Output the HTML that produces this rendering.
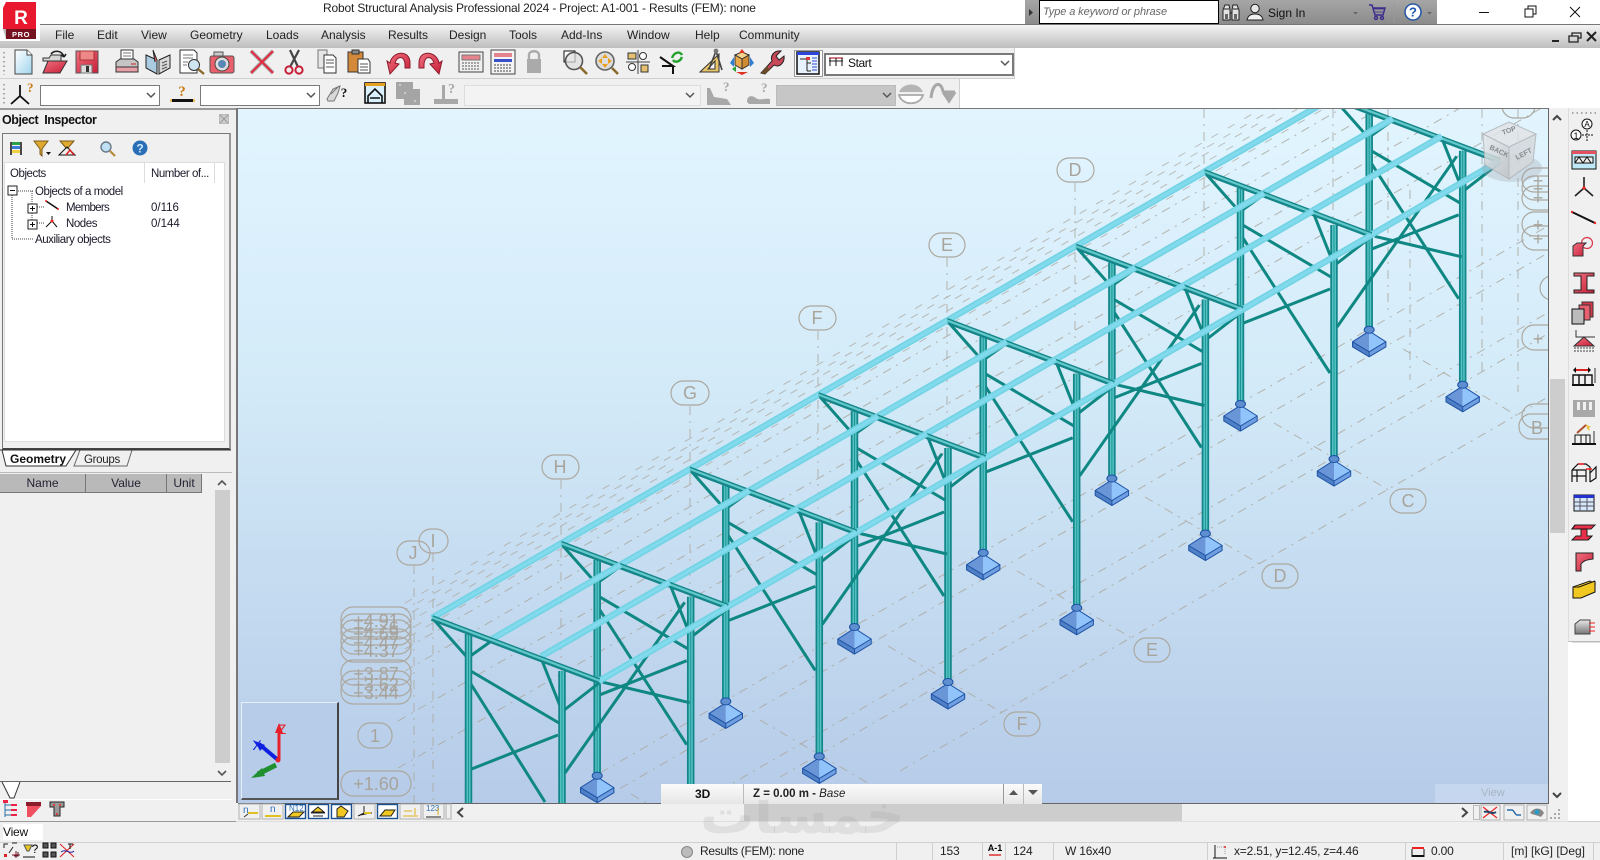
<!DOCTYPE html>
<html><head><meta charset="utf-8"><title>Robot Structural Analysis</title>
<style>
html,body{margin:0;padding:0;background:#fff;width:1600px;height:860px;overflow:hidden}
#p{position:relative;width:1600px;height:860px;overflow:hidden;background:#fff;font:12px "Liberation Sans",sans-serif;color:#111}
#p div{position:absolute;box-sizing:border-box}
.t{white-space:nowrap;line-height:14px}
.m{top:28px;font-size:12px;color:#222}
.s{top:844px;font-size:12px;color:#222;letter-spacing:-.2px}
.v{top:843px;width:1px;height:17px;background:#cfcfcf}
.o{font-size:11.5px;color:#1a1a2a;letter-spacing:-.45px}
.h{top:474px;height:19px;background:#b9b9b9;border-right:1px solid #777;border-bottom:1px solid #777;text-align:center;line-height:19px;color:#223}
</style></head><body><div id="p">

<!-- title bar -->
<div class="t" style="left:323px;top:1px;font-size:12px;color:#222;letter-spacing:-.17px">Robot Structural Analysis Professional 2024 - Project: A1-001 - Results (FEM): none</div>
<div style="left:1025px;top:0;width:412px;height:25px;background:linear-gradient(#a6a6a6,#8a8a8a)"></div>
<div class="t" style="left:1039px;top:0;width:180px;height:24px;background:#fff;border:1px solid #000;padding:4px 3px;font-size:11px;letter-spacing:-.1px;font-style:italic;color:#666">Type a keyword or phrase</div>
<div class="t" style="left:1268px;top:6px;color:#111">Sign In</div>

<!-- menu bar -->
<div style="left:0;top:24px;width:1600px;height:24px;background:linear-gradient(#f4f4f4,#bdbdbd);border-top:1px solid #777"></div>
<div class="t m" style="left:55px">File</div>
<div class="t m" style="left:97px">Edit</div>
<div class="t m" style="left:141px">View</div>
<div class="t m" style="left:190px">Geometry</div>
<div class="t m" style="left:266px">Loads</div>
<div class="t m" style="left:321px">Analysis</div>
<div class="t m" style="left:388px">Results</div>
<div class="t m" style="left:449px">Design</div>
<div class="t m" style="left:509px">Tools</div>
<div class="t m" style="left:561px">Add-Ins</div>
<div class="t m" style="left:627px">Window</div>
<div class="t m" style="left:695px">Help</div>
<div class="t m" style="left:739px">Community</div>

<!-- toolbars -->
<div style="left:0;top:48px;width:1015px;height:31px;background:#f0f0f0;border-bottom:1px solid #cfcfcf;border-right:1px solid #cfcfcf"></div>
<div style="left:0;top:79px;width:960px;height:29px;background:#f0f0f0;border-right:1px solid #cfcfcf"></div>
<div style="left:794px;top:50px;width:29px;height:27px;background:#fff;border:1px solid #999"></div>
<div class="t" style="left:824px;top:53px;width:190px;height:23px;background:#fff;border:2px solid #7a7a7a;padding:1px 0 0 22px;letter-spacing:-.4px">Start</div>
<div style="left:40px;top:85px;width:120px;height:21px;background:#fff;border:1px solid #7a7a7a"></div>
<div style="left:200px;top:85px;width:120px;height:21px;background:#fff;border:1px solid #7a7a7a"></div>
<div style="left:464px;top:85px;width:237px;height:21px;background:#f3f3f3;border:1px solid #ddd"></div>
<div style="left:776px;top:85px;width:120px;height:21px;background:#c6c6c6;border:1px solid #bbb"></div>

<!-- left panel -->
<div style="left:0;top:108px;width:236px;height:714px;background:#f0f0f0;border-top:2px solid #9a9a9a;border-bottom:1px solid #999"></div>
<div class="t" style="left:2px;top:113px;font-size:12.5px;font-weight:bold;letter-spacing:-.45px;word-spacing:3px;color:#111">Object Inspector</div>
<div style="left:219px;top:114px;width:10px;height:10px;background:#ccc;border:1px solid #bbb"></div>
<div style="left:2px;top:133px;width:229px;height:317px;border:1px solid #777;border-bottom:2px solid #444;border-right:2px solid #999;background:#f0f0f0"></div>
<div style="left:4px;top:162px;width:221px;height:280px;background:#fff;border:1px solid #ddd"></div>
<div style="left:144px;top:163px;width:1px;height:20px;background:#ddd"></div>
<div style="left:214px;top:163px;width:1px;height:20px;background:#ddd"></div>
<div class="t o" style="left:10px;top:167px">Objects</div>
<div class="t o" style="left:151px;top:167px">Number of...</div>
<div class="t o" style="left:35px;top:185px">Objects of a model</div>
<div class="t o" style="left:66px;top:201px;letter-spacing:-.7px">Members</div>
<div class="t o" style="left:151px;top:201px;letter-spacing:0">0/116</div>
<div class="t o" style="left:66px;top:217px">Nodes</div>
<div class="t o" style="left:151px;top:217px;letter-spacing:0">0/144</div>
<div class="t o" style="left:35px;top:233px">Auxiliary objects</div>
<div style="left:0;top:472px;width:232px;height:1px;background:#bbb"></div>
<div class="h" style="left:0;width:86px">Name</div>
<div class="h" style="left:86px;width:81px">Value</div>
<div class="h" style="left:167px;width:35px">Unit</div>
<div style="left:215px;top:490px;width:15px;height:273px;background:#cdcdcd"></div>
<div style="left:0;top:781px;width:231px;height:1px;background:#666"></div>
<div style="left:0;top:799px;width:232px;height:1px;background:#fff"></div>

<!-- viewport -->
<div style="left:236px;top:108px;width:2px;height:695px;background:#777"></div>
<div style="left:238px;top:108px;width:1311px;height:696px;overflow:hidden;border-top:1px solid #777;border-bottom:1px solid #666;border-right:1px solid #666;background:linear-gradient(#e2f5ff 0%,#d3eaf8 40%,#b5cbe8 100%)">
<svg width="1600" height="695" viewBox="0 0 1600 695" style="position:absolute;left:-238px;top:0" xmlns="http://www.w3.org/2000/svg">
<g transform="translate(0 -109)">
<defs>
<line id="L" x1="0" y1="0" x2="1400" y2="-808"/>
<line id="G" x1="-60" y1="-35" x2="56" y2="32.700"/>
<g id="ft">
<path d="M-16.7-1L0 9V14L-16.7 4Z" fill="#4f7fc4"/><path d="M16.7-1L0 9V14L16.7 4Z" fill="#6f9fe0"/>
<path d="M-16.7-1L0-11.7V9Z" fill="#6a96d8"/><path d="M16.7-1L0-11.7V9Z" fill="#90c4fb"/>
<path d="M0-11.7L-16.7-1V4L0 14L16.7 4V-1ZM-16.7-1L0 9L16.7-1M0 9V14" fill="none" stroke="#1d52a5" stroke-width="1"/>
<ellipse cx="0" cy="-13" rx="5" ry="3.500" fill="#5d8ed0" stroke="#1d52a5"/>
</g>
<g id="f">
<path d="M3 3L34 38M37 39L58 24M109 40L128 88M131 93L167 65M37 52L127 105M37 63L126 201M37 152L126 117" stroke="#0f8783" stroke-width="3" fill="none"/>
<path d="M36.5 16V232M130 53V287" stroke="#12868a" stroke-width="7.500" fill="none"/>
<path d="M36.5 16V232M130 53V287" stroke="#55c2c2" stroke-width="4" fill="none"/>
<path d="M36.5 16V232M130 53V287" stroke="#1d9698" stroke-width="1" fill="none"/>
<use href="#ft" x="36.5" y="245"/><use href="#ft" x="130" y="300"/>
</g>
<g id="f0">
<path d="M3 3L34 38M37 39L58 24M109 40L128 88M131 93L167 65M37 52L127 105M37 63L113 184M37 152L126 117" stroke="#0f8783" stroke-width="3" fill="none"/>
<path d="M36.5 16V185M130 53V185" stroke="#12868a" stroke-width="7.500" fill="none"/>
<path d="M36.5 16V185M130 53V185" stroke="#55c2c2" stroke-width="4" fill="none"/>
<path d="M36.5 16V185M130 53V185" stroke="#1d9698" stroke-width="1" fill="none"/>
</g>
<g id="r">
<path d="M0 0L167 63" stroke="#14868a" stroke-width="6"/>
<path d="M0-.5L167 62.5" stroke="#62c8ca" stroke-width="2.200"/>
</g>
<g id="pu" stroke-width="6.500" fill="none">
<path stroke="#74d3e5" d="M0 0L128.7-74.3M60 21L188.7-53.3M109 38.5L237.7-35.8M167 63L295.7-11.3"/>
<path stroke="#82dbec" stroke-width="3" d="M0 0L128.7-74.3M60 21L188.7-53.3M109 38.5L237.7-35.8M167 63L295.7-11.3"/>
</g>
<path id="h" d="M133 155L252.7-15.7" stroke="#0f8783" stroke-width="3"/>
<path id="i" d="M42 138.5L129 159" stroke="#0f8783" stroke-width="3"/>
<linearGradient id="cb" x1="0" y1="0" x2="1" y2="1"><stop offset="0" stop-color="#e8eaec"/><stop offset="1" stop-color="#bfc3c7"/></linearGradient>
</defs>

<!-- grid -->
<g stroke="#aca89f" stroke-width="1" fill="none" stroke-dasharray="8 11" stroke-opacity=".75">
<use href="#L" x="405" y="603" stroke-dashoffset="0"/><use href="#L" x="405" y="610" stroke-dashoffset="5"/><use href="#L" x="405" y="616" stroke-dashoffset="11"/><use href="#L" x="405" y="624" stroke-dashoffset="2"/><use href="#L" x="405" y="632" stroke-dashoffset="8"/><use href="#L" x="405" y="639" stroke-dashoffset="14"/>
</g>
<g stroke="#aca89f" stroke-width="1" fill="none" stroke-dasharray="9 6 2 6" stroke-opacity=".85">
<use href="#L" x="405" y="649"/><use href="#L" x="405" y="671"/><use href="#L" x="398" y="721"/><use href="#L" x="398" y="768"/>
<use href="#L" x="600" y="773"/><use href="#L" x="600" y="800"/><use href="#L" x="700" y="802"/><use href="#L" x="780" y="777"/><use href="#L" x="900" y="771"/>
<path d="M631 794L700 834"/>
<use href="#G" x="820" y="755"/><use href="#G" x="948" y="681"/><use href="#G" x="1077" y="606"/><use href="#G" x="1205" y="532"/><use href="#G" x="1334" y="458"/><use href="#G" x="1463" y="384"/>
<path d="M414 565V803M433 553V803M561 480V780M690 406V710M818 331V640M947 258V560M1075 183V490M1204 109V415M1333 109V280M1388 109V310M1410 190V380M1482 109V372M1518 109V392"/>
</g>

<!-- structure, back to front -->
<use href="#f" x="1332.7" y="97.8"/><use href="#i" x="1332.7" y="97.8"/><use href="#r" x="1332.7" y="97.8"/>
<use href="#f" x="1204" y="172"/><use href="#h" x="1204" y="172"/><use href="#pu" x="1204" y="172"/><use href="#r" x="1204" y="172"/>
<use href="#f" x="1075.4" y="246.5"/><use href="#i" x="1075.4" y="246.5"/><use href="#pu" x="1075.4" y="246.5"/><use href="#r" x="1075.4" y="246.5"/>
<use href="#f" x="946.7" y="320.8"/><use href="#h" x="946.7" y="320.8"/><use href="#pu" x="946.7" y="320.8"/><use href="#r" x="946.7" y="320.8"/>
<use href="#f" x="818" y="395"/><use href="#i" x="818" y="395"/><use href="#pu" x="818" y="395"/><use href="#r" x="818" y="395"/>
<use href="#f" x="689.3" y="469.4"/><use href="#h" x="689.3" y="469.4"/><use href="#pu" x="689.3" y="469.4"/><use href="#r" x="689.3" y="469.4"/>
<use href="#f" x="560.7" y="543.7"/><use href="#i" x="560.7" y="543.7"/><use href="#pu" x="560.7" y="543.7"/><use href="#r" x="560.7" y="543.7"/>
<use href="#f0" x="432" y="618"/><use href="#h" x="432" y="618"/><use href="#pu" x="432" y="618"/><use href="#r" x="432" y="618"/>

<!-- labels -->
<g fill="none" stroke="#aca89f" stroke-width="1.200">
<rect x="1057" y="158" width="37" height="24" rx="12"/><rect x="929" y="233" width="36" height="24" rx="12"/><rect x="799" y="306" width="37" height="24" rx="12"/><rect x="671" y="381" width="38" height="24" rx="12"/><rect x="542" y="455" width="37" height="24" rx="12"/><rect x="397" y="541" width="33" height="24" rx="12"/><rect x="419" y="529" width="29" height="24" rx="12"/>
<rect x="1390" y="489" width="36" height="24" rx="12"/><rect x="1262" y="564" width="36" height="24" rx="12"/><rect x="1134" y="638" width="36" height="24" rx="12"/><rect x="1004" y="712" width="36" height="24" rx="12"/>
<rect x="341" y="607" width="70" height="25" rx="12"/><rect x="341" y="614" width="70" height="25" rx="12"/><rect x="341" y="620" width="70" height="25" rx="12"/><rect x="341" y="629" width="70" height="25" rx="12"/><rect x="341" y="637" width="70" height="25" rx="12"/><rect x="341" y="660" width="70" height="25" rx="12"/><rect x="341" y="671" width="70" height="25" rx="12"/><rect x="341" y="679" width="70" height="25" rx="12"/>
<rect x="358" y="723" width="34" height="25" rx="12"/><rect x="341" y="771" width="70" height="25" rx="12"/>
<rect x="1502" y="94" width="33" height="24" rx="12"/><rect x="1522" y="168" width="50" height="24" rx="12"/><rect x="1522" y="176" width="50" height="24" rx="12"/><rect x="1522" y="186" width="50" height="24" rx="12"/><rect x="1522" y="212" width="50" height="24" rx="12"/><rect x="1522" y="226" width="50" height="24" rx="12"/><rect x="1540" y="276" width="40" height="24" rx="12"/><rect x="1522" y="325" width="50" height="25" rx="12"/><rect x="1522" y="404" width="50" height="24" rx="12"/><rect x="1519" y="414" width="50" height="25" rx="12"/>
</g>
<g fill="#a8a49c" font-family="Liberation Sans,sans-serif" font-size="18" text-anchor="middle">
<text x="1075" y="176">D</text><text x="947" y="251">E</text><text x="817" y="324">F</text><text x="690" y="399">G</text><text x="560" y="473">H</text><text x="413" y="559">J</text><text x="433" y="547">I</text>
<text x="1408" y="507">C</text><text x="1280" y="582">D</text><text x="1152" y="656">E</text><text x="1022" y="730">F</text>
<text x="1538" y="345">+</text><text x="1537" y="434">B</text>
<text x="1538" y="187">+</text><text x="1538" y="195">+</text><text x="1538" y="204">+</text><text x="1538" y="231">+</text><text x="1538" y="245">+</text>
<text x="376" y="627">+4.91</text><text x="376" y="634">+4.76</text><text x="376" y="640">+4.69</text><text x="376" y="649">+4.47</text><text x="376" y="657">+4.37</text><text x="376" y="680">+3.87</text><text x="376" y="691">+3.62</text><text x="376" y="699">+3.44</text>
<text x="375" y="742">1</text><text x="376" y="790">+1.60</text>
</g>

<!-- view cube -->
<ellipse cx="1512" cy="168" rx="30" ry="14" fill="#9aa0a6" opacity=".3"/>
<g stroke="#adb0b4" stroke-width="1" opacity=".82">
<path d="M1509 122L1483 134L1509 147L1536 134Z" fill="#e2e4e6"/>
<path d="M1483 134L1485 165L1509 179V147Z" fill="url(#cb)"/>
<path d="M1536 134L1533 162L1509 179V147Z" fill="#d5d8db"/>
</g>
<g fill="#85888b" font-size="7" font-family="Liberation Sans,sans-serif" font-weight="bold">
<text transform="translate(1489 149) rotate(25)">BACK</text><text transform="translate(1517 160) rotate(-28)">LEFT</text><text transform="translate(1503 135) rotate(-20)">TOP</text>
</g>
</g>
</svg>
</div>

<!-- nav box -->
<div style="left:241px;top:702px;width:98px;height:98px;background:#b6cce8;border-top:1px solid #e6eef8;border-left:1px solid #e6eef8;border-right:2px solid #444;border-bottom:2px solid #555"></div>

<!-- floating view bar -->
<div style="left:661px;top:784px;width:381px;height:20px;background:linear-gradient(#fbfbfb,#e6e6e6)"></div>
<div style="left:743px;top:784px;width:1px;height:20px;background:#bbb"></div>
<div style="left:1003px;top:784px;width:1px;height:20px;background:#999"></div>
<div style="left:1023px;top:784px;width:1px;height:20px;background:#bbb"></div>
<div class="t" style="left:695px;top:787px;font-weight:bold;font-size:12px">3D</div>
<div class="t" style="left:753px;top:787px;font-weight:bold;font-size:11.5px;color:#222">Z = 0.00 m - <i style="font-weight:normal">Base</i></div>
<div style="left:1435px;top:784px;width:113px;height:19px;background:rgba(225,235,248,.35)"></div>
<div class="t" style="left:1481px;top:786px;font-size:11px;color:#a9b4c2">View</div>

<!-- right scrollbar & toolbar -->
<div style="left:1549px;top:108px;width:19px;height:696px;background:#f0f0f0"></div>
<div style="left:1550px;top:379px;width:15px;height:154px;background:#cdcdcd"></div>
<div style="left:1568px;top:108px;width:32px;height:534px;background:#f0f0f0;border-left:1px solid #ddd;border-bottom:1px solid #bbb"></div>

<!-- bottom strip -->
<div style="left:236px;top:804px;width:1332px;height:18px;background:#f0f0f0;border-bottom:1px solid #ddd"></div>
<div style="left:744px;top:804px;width:438px;height:17px;background:#cdcdcd"></div>
<div style="left:0;top:822px;width:1600px;height:38px;background:#f0f0f0"></div>
<div style="left:1568px;top:821px;width:32px;height:1px;background:#ccc"></div>
<div style="left:0;top:842px;width:1600px;height:1px;background:#d0d0d0"></div>
<div class="t" style="left:3px;top:824px;width:40px;height:16px;background:#fff;padding-top:1px;font-size:12px;letter-spacing:-.2px">View</div>

<!-- status bar -->
<div class="v" style="left:896px"></div><div class="v" style="left:932px"></div><div class="v" style="left:982px"></div><div class="v" style="left:1005px"></div><div class="v" style="left:1053px"></div><div class="v" style="left:1207px"></div><div class="v" style="left:1405px"></div><div class="v" style="left:1503px"></div><div class="v" style="left:1593px"></div>
<div class="t s" style="left:700px;letter-spacing:-.32px">Results (FEM): none</div>
<div class="t s" style="left:940px">153</div>
<div class="t s" style="left:1013px">124</div>
<div class="t s" style="left:1065px">W 16x40</div>
<div class="t s" style="left:1234px">x=2.51, y=12.45, z=4.46</div>
<div class="t s" style="left:1431px">0.00</div>
<div class="t s" style="left:1511px;letter-spacing:0">[m] [kG] [Deg]</div>

<!-- watermark -->
<div style="left:700px;top:800px;width:200px;height:42px;overflow:hidden"><div class="t" style="left:0;top:-12px;font:bold 54px/54px 'DejaVu Sans',sans-serif;color:rgba(150,150,150,.18)">خمسات</div></div>

<!-- icons overlay -->
<svg width="1600" height="860" viewBox="0 0 1600 860" style="position:absolute;left:0;top:0;display:block" xmlns="http://www.w3.org/2000/svg" font-family="Liberation Sans,sans-serif">
<defs>
<linearGradient id="dg" x1="0" y1="0" x2="1" y2="1"><stop offset="0" stop-color="#fff"/><stop offset="1" stop-color="#9fd4ee"/></linearGradient>
<linearGradient id="rg" x1="0" y1="0" x2="1" y2="1"><stop offset="0" stop-color="#f0707f"/><stop offset="1" stop-color="#c81e38"/></linearGradient>
<linearGradient id="gg" x1="0" y1="0" x2="0" y2="1"><stop offset="0" stop-color="#e8e8e8"/><stop offset="1" stop-color="#777"/></linearGradient>
<path id="cv" d="M-4-2L0 2L4-2" fill="none" stroke="#555" stroke-width="1.500"/>
</defs>

<!-- logo -->
<rect x="0" y="0" width="40" height="41" fill="#fff"/>
<path d="M6 2H36V29H3V8Z" fill="#e8182f"/>
<path d="M6 29H36V39H6Z" fill="#75121f"/><path d="M3 29L6 29V39Z" fill="#b8b8b8"/>
<text x="21" y="24" text-anchor="middle" font-size="19" font-weight="bold" fill="#fff">R</text>
<text x="21" y="37" text-anchor="middle" font-size="7.500" font-weight="bold" fill="#fff" letter-spacing=".6">PRO</text>

<!-- title bar icons -->
<path d="M1029 9L1033 12.5L1029 16Z" fill="#333"/>
<g transform="translate(1231 12)"><path d="M-8 8V-2L-6-7H-2L-1-2V8ZM1 8V-2L2-7H6L8-2V8Z" fill="#e2e2e2" stroke="#222"/><path d="M-7-3H-2M2-3H7M-1 1H1" stroke="#222"/><rect x="-6" y="2" width="3" height="5" fill="#666"/><rect x="3" y="2" width="3" height="5" fill="#666"/></g>
<g transform="translate(1255 12)"><circle cx="0" cy="-3.500" r="4.200" fill="#e8e8e8" stroke="#222"/><path d="M-8 8C-7 3-3 2 0 2S7 3 8 8Z" fill="#f2f2f2" stroke="#222"/></g>
<path d="M1353 12H1358L1355.5 14.5Z" fill="#666"/>
<g transform="translate(1377 12)" fill="none" stroke="#3a2a8c" stroke-width="1.400"><path d="M-8-7H-5L-2 3H6L8-4H-4"/><path d="M-3-3H7M-2 0H6" stroke-width=".8"/><circle cx="-1" cy="6" r="1.500"/><circle cx="5" cy="6" r="1.500"/></g>
<path d="M1394 3V22" stroke="#999"/>
<circle cx="1413" cy="12" r="8" fill="#fff" stroke="#2b5aa5" stroke-width="1.600"/><text x="1413" y="16.5" text-anchor="middle" font-size="13" font-weight="bold" fill="#1d55b0">?</text>
<path d="M1427 12H1432L1429.5 14.5Z" fill="#666"/>
<path d="M1479 12.5H1489" stroke="#111"/>
<path d="M1525 9H1533V17H1525ZM1528 9V6H1536V14H1533" fill="none" stroke="#111"/>
<path d="M1570 7L1580 17M1580 7L1570 17" stroke="#111"/>
<path d="M1552 41H1559" stroke="#222" stroke-width="2"/>
<path d="M1569 36H1578V42H1569ZM1572 36V33H1581V38H1578" fill="none" stroke="#222" stroke-width="1.300"/>
<path d="M1587 32L1596 41M1596 32L1587 41" stroke="#222" stroke-width="2"/>

<!-- grippers -->
<path d="M4 52V75M4 84V106M1572 113H1598" stroke="#a8a8a8" stroke-width="2" stroke-dasharray="1.500 3"/>

<!-- row 1 -->
<g transform="translate(23 62)"><path d="M-8-12H4L9-7V12H-8Z" fill="url(#dg)" stroke="#444"/><path d="M4-12V-7H9" fill="#fff" stroke="#444"/></g>
<g transform="translate(54 62)"><path d="M-11-4H-5L-3-7H7V-1H-11Z" fill="#d5d5d5" stroke="#333"/><path d="M-11 11L-6-1H13L6 11Z" fill="url(#rg)" stroke="#333"/><path d="M-3-8C0-12 8-12 10-5M10-5L7-7M10-5L12-8" fill="none" stroke="#222" stroke-width="1.600"/></g>
<g transform="translate(87 62)"><rect x="-11" y="-11" width="22" height="22" fill="url(#rg)" stroke="#555"/><rect x="-7" y="-11" width="14" height="9" fill="#e88" stroke="#a33"/><rect x="-6" y="3" width="11" height="8" fill="#ddd" stroke="#777"/><rect x="-1" y="4" width="3" height="6" fill="#333"/></g>
<g transform="translate(127 62)"><rect x="-6" y="-12" width="12" height="10" fill="#fff" stroke="#333"/><path d="M-4-9H4M-4-6H4" stroke="#777"/><path d="M-11 9V0L-7-3H7L11 0V9Z" fill="#c5c5c5" stroke="#333"/><rect x="-11" y="5" width="22" height="5" fill="#e8a0a8" stroke="#333"/><path d="M4 2H9" stroke="#c22"/></g>
<g transform="translate(158 62)"><path d="M-12-7L-1-2V12L-12 6Z" fill="#aacbe0" stroke="#222"/><path d="M12-7L1-2V12L12 6Z" fill="#d9d9d9" stroke="#222"/><path d="M-1-2L-5-12L-3 0" fill="#e8606f" stroke="#222"/><path d="M4 1L9-1M4 4L9 2M4 7L9 5" stroke="#555"/></g>
<g transform="translate(191 62)"><path d="M-11-12H3L6-9V11H-11Z" fill="#fff" stroke="#333"/><path d="M-8-7H2M-8-4H2M-8 0H-3M-8 3H-4" stroke="#777"/><circle cx="3" cy="3" r="5.500" fill="#cfe6f2" stroke="#333"/><path d="M7 7L13 12" stroke="#8a6a2a" stroke-width="2.400"/></g>
<g transform="translate(222 62)"><rect x="-12" y="-6" width="24" height="17" rx="2" fill="#e9606c" stroke="#555"/><rect x="-8" y="-10" width="9" height="4" fill="#ccc" stroke="#555"/><circle cx="0" cy="2" r="7" fill="#ddd" stroke="#444"/><circle cx="0" cy="2" r="4" fill="#5a86b5"/></g>
<g transform="translate(262 62)"><path d="M-11-11L11 11M11-11L-11 11" stroke="#aaa" stroke-width="4"/><path d="M-11-11L11 11M11-11L-11 11" stroke="#e4283f" stroke-width="2"/></g>
<g transform="translate(294 62)"><path d="M-4-12L4 5M5-12L-4 5" stroke="#444" stroke-width="2.200"/><circle cx="-5" cy="8" r="3.600" fill="#eee" stroke="#c8203a" stroke-width="2"/><circle cx="5" cy="8" r="3.600" fill="#eee" stroke="#c8203a" stroke-width="2"/></g>
<g transform="translate(327 62)"><path d="M-9-12H0V6H-9Z" fill="#e6e6e6" stroke="#777"/><path d="M-3-7H6L9-4V11H-3Z" fill="#fff" stroke="#333"/><path d="M-1-2H7M-1 1H7M-1 5H7" stroke="#555"/></g>
<g transform="translate(359 62)"><rect x="-11" y="-10" width="15" height="20" fill="#d4893a" stroke="#333"/><rect x="-7" y="-12" width="7" height="4" fill="#888" stroke="#333"/><path d="M-1-3H9L11 0V11H-1Z" fill="#fff" stroke="#333"/><path d="M1 2H9M1 5H9M1 8H9" stroke="#555"/></g>
<g transform="translate(399 62)"><path d="M-9 1C-7-11 11-13 11 1V6H6V2C5-7-2-6-4 1L0 2L-9 12L-12-1Z" fill="url(#rg)" stroke="#8a1c2c"/></g>
<g transform="translate(430 62)"><path d="M9 1C7-11-11-13-11 1V6H-6V2C-5-7 2-6 4 1L0 2L9 12L12-1Z" fill="url(#rg)" stroke="#8a1c2c"/></g>
<g transform="translate(471 62)"><rect x="-12" y="-10" width="24" height="20" fill="#f0f0f0" stroke="#444"/><rect x="-9" y="-7" width="18" height="5" fill="#e5848f" stroke="#777"/><path d="M-9 1H9M-9 4H9M-9 7H9" stroke="#555" stroke-dasharray="2 1"/></g>
<g transform="translate(503 62)"><rect x="-12" y="-12" width="24" height="24" fill="#f3f3f3" stroke="#444"/><rect x="-9" y="-9" width="18" height="4" fill="#e5848f"/><rect x="-9" y="-3" width="18" height="3" fill="#3850c8"/><path d="M-9 3H9M-9 6H9M-9 9H9" stroke="#444" stroke-dasharray="2 1"/></g>
<g transform="translate(534 62)" fill="#aaa"><rect x="-7" y="-3" width="14" height="14"/><path d="M-5-3V-7C-5-12 5-12 5-7V-3" fill="none" stroke="#aaa" stroke-width="2.400"/></g>
<g transform="translate(575 62)"><rect x="-11" y="-11" width="11" height="11" fill="#fff" stroke="#111"/><circle cx="-1" cy="-1" r="8.500" fill="#ddd" fill-opacity=".7" stroke="#555" stroke-width="1.600"/><path d="M5 5L12 12" stroke="#8a6a2a" stroke-width="2.600"/></g>
<g transform="translate(606 62)"><circle cx="-1" cy="-1" r="9" fill="#ddd" stroke="#666" stroke-width="1.600"/><path d="M-1-8L-4-4H2ZM-1 6L-4 2H2ZM-8-1L-4-4V2ZM6-1L2-4V2Z" fill="#e8a020"/><path d="M6 6L12 12" stroke="#8a6a2a" stroke-width="2.600"/></g>
<g transform="translate(638 62)"><path d="M-12 0H12M0-12V12" stroke="#444"/><rect x="-10" y="-9" width="8" height="6" fill="#e6c070" stroke="#333"/><circle cx="5" cy="-6" r="3.500" fill="#fff" stroke="#333"/><circle cx="-6" cy="5" r="3.500" fill="#fff" stroke="#333"/><path d="M3 3H10V10H3Z" fill="#e6c070" stroke="#333"/></g>
<g transform="translate(671 62)"><path d="M-11-5L2 4H-9M2 4V12" fill="none" stroke="#111" stroke-width="2"/><path d="M1-4C3-10 9-11 11-7M11-5C9 0 4 1 2-2" fill="none" stroke="#21a02b" stroke-width="2.400"/></g>
<g transform="translate(711 62)"><path d="M-11 10L8-8V10Z" fill="#e8c46a" stroke="#333"/><path d="M-3 7L4-1V7Z" fill="#f0f0f0" stroke="#333"/><path d="M5-11L-2 7M5-11L11 8" stroke="#444" stroke-width="1.600"/><circle cx="5" cy="-11" r="2.400" fill="#777"/></g>
<g transform="translate(742 62)"><path d="M0-3L-7-7L0-10L7-7Z" fill="#f4d488" stroke="#333"/><path d="M-7-7V3L0 7V-3Z" fill="#e8a84c" stroke="#333"/><path d="M7-7V3L0 7V-3Z" fill="#d08a30" stroke="#333"/><path d="M-12 1L-8-5V5ZM12 1L8-5V5Z" fill="#2f7ecf"/><path d="M0-13L-3-9H3ZM-6 10H6L0 13Z" fill="#d32"/><path d="M-10 7L-6 4V10Z" fill="#28a038"/></g>
<g transform="translate(773 62)"><path d="M-12 11L-1-1C-3-6 1-12 8-11L3-6L6-2L11-6C12 1 6 6 1 3L-8 12Z" fill="#c9485a" stroke="#222"/><path d="M-12 11L-6 4L-3 8L-8 12Z" fill="#6a4a2a"/></g>
<g transform="translate(808 63)"><rect x="-11" y="-11" width="22" height="22" fill="#e8f2fc" stroke="#111" stroke-width="1.500"/><rect x="-11" y="-11" width="22" height="3" fill="#2b45d8"/><path d="M-8-4H-1M-1-4V8M-1 0H3M-1 8H3" stroke="#222" fill="none"/><path d="M4-5H9M4-2H9M4 1H9M4 4H9M4 7H9" stroke="#2b45d8"/><rect x="-2" y="-6" width="4" height="3" fill="#d33"/></g>
<g transform="translate(836 62)" fill="none" stroke-width="1.100"><path d="M-7-4H7" stroke="#b01028"/><path d="M-7-1H7M-6-4V4M0-4V4M6-4V4" stroke="#222"/></g>
<use href="#cv" x="1005" y="63"/>

<!-- row 2 -->
<g transform="translate(20 93)"><path d="M-9 11L0 3L9 11M0 3V-8" fill="none" stroke="#111" stroke-width="1.800"/><text x="7" y="-1" font-size="13" font-weight="bold" fill="#c87a14" font-family="Liberation Serif,serif">?</text></g>
<use href="#cv" x="151" y="95"/>
<g transform="translate(182 92)"><rect x="-11" y="7" width="23" height="3" fill="#111"/><path d="M-11 7V10M12 7V10" stroke="#e8c060" stroke-width="2"/><text x="0" y="4" text-anchor="middle" font-size="15" font-weight="bold" fill="#c87a14" font-family="Liberation Serif,serif">?</text></g>
<use href="#cv" x="311" y="95"/>
<g transform="translate(336 94)"><path d="M-9 5L-3-5L4-8L2-1L-2 7H-8Z" fill="#d8d8d8" stroke="#777"/><path d="M-5 0L3-8" stroke="#777"/><text x="8" y="3" text-anchor="middle" font-size="13" font-weight="bold" fill="#111" font-family="Liberation Serif,serif">?</text></g>
<g transform="translate(375 93)"><rect x="-10" y="-10" width="20" height="20" fill="#d8f0fc" stroke="#111" stroke-width="1.600"/><rect x="-10" y="-10" width="20" height="3" fill="#e8a020"/><path d="M-7 10V3L0-4L7 3V10M-5 5H5" fill="none" stroke="#111" stroke-width="1.600"/></g>
<g transform="translate(408 93)" fill="#a5a5a5"><rect x="-12" y="-11" width="17" height="17"/><rect x="-4" y="-4" width="16" height="16"/><path d="M-9-8H-7M-4 0H-2M6 8H8" stroke="#eee"/></g>
<g transform="translate(446 93)" fill="#a8a8a8"><text x="2" y="0" font-size="14" font-weight="bold" font-family="Liberation Serif,serif">?</text><rect x="-4" y="-8" width="3" height="16"/><rect x="-12" y="6" width="24" height="5"/></g>
<use href="#cv" x="690" y="95"/>
<g transform="translate(719 93)" fill="#a8a8a8"><text x="4" y="-2" font-size="13" font-weight="bold" font-family="Liberation Serif,serif">?</text><path d="M-12-5L-9-5L-5 4L8 6L12 12H-12Z"/></g>
<g transform="translate(759 93)" fill="#a8a8a8"><text x="2" y="-1" font-size="13" font-weight="bold" font-family="Liberation Serif,serif">?</text><path d="M-12 9C-12 2-7 2-3 5C0 8 6 5 11 6V11H-10Z"/></g>
<use href="#cv" x="887" y="95"/>
<g transform="translate(911 94)"><path d="M-12-2C-8-12 8-12 12-2Z" fill="#b5b5b5"/><path d="M-12 1H12C9 12-9 12-12 1Z" fill="#fff" stroke="#aaa" stroke-width="1.800"/></g>
<g transform="translate(943 92)" fill="none" stroke="#a8a8a8" stroke-width="3"><path d="M-12 6C-10-12-1-10 0 0M0 0L12 0"/><path d="M0 0L6 9L12 0" fill="#a8a8a8"/></g>

<!-- object inspector icons -->
<g transform="translate(16 148)"><path d="M-5-6V7M5-6V7" stroke="#111" stroke-width="1.500"/><rect x="-4" y="-6" width="8" height="3" fill="#2aa04a"/><rect x="-4" y="-2" width="8" height="3" fill="#3a7ad8"/><rect x="-4" y="2" width="8" height="3" fill="#f0d040"/></g>
<g transform="translate(41 148)"><path d="M-7-7H7L1 1V8L-1 6V1Z" fill="#e0aa30" stroke="#7a5a18"/><path d="M5 4H10L7.500 7Z" fill="#111"/></g>
<g transform="translate(67 148)"><path d="M-7-7H7L1 0L-1 0Z" fill="#e0aa30" stroke="#7a5a18"/><path d="M-8 7L0-1L8 7Z" fill="none" stroke="#111"/><path d="M-1 7L3 2L7 7" fill="none" stroke="#d22" stroke-width="1.500"/></g>
<g transform="translate(107 148)"><circle cx="-1" cy="-1" r="5" fill="#bfe0f2" stroke="#6a7a88" stroke-width="1.400"/><path d="M3 3L8 8" stroke="#b88a3a" stroke-width="2.200"/></g>
<circle cx="140" cy="148" r="7.500" fill="#2a6fb5"/><text x="140" y="152.5" text-anchor="middle" font-size="12" font-weight="bold" fill="#cfe8ff">?</text>
<path d="M220 115L228 123M228 115L220 123" stroke="#999"/>

<!-- tree -->
<path d="M12 191V239H34M12 191H34M32 191V223M37 207H44M37 223H44" fill="none" stroke="#444" stroke-dasharray="1 1"/>
<g fill="#fff" stroke="#222"><rect x="8" y="186" width="9" height="9"/><rect x="28" y="204" width="9" height="9"/><rect x="28" y="220" width="9" height="9"/></g>
<path d="M10 190.5H15M30 208.5H35M32.5 206V211M30 224.5H35M32.5 222V227" stroke="#111"/>
<path d="M46 201L58 209" stroke="#111" stroke-width="1.600"/><circle cx="46" cy="201" r="1" fill="#e22"/><circle cx="58" cy="209" r="1" fill="#e22"/>
<path d="M46 227L52 221L57 227M52 221V216" fill="none" stroke="#111"/><circle cx="52" cy="221" r="1.500" fill="#e22"/>

<!-- tabs -->
<path d="M74 466L80 450H132L127 466Z" fill="#f0f0f0" stroke="#666"/>
<path d="M2 450L6 466H66L76 450" fill="#fff" stroke="#333"/>
<path d="M0 450H231" stroke="#333"/>
<text x="10" y="463" font-size="12" font-weight="bold" fill="#111">Geometry</text>
<text x="84" y="463" font-size="11.500" fill="#222" letter-spacing="-.3">Groups</text>
<path d="M218 485L222 481L226 485M218 771L222 775L226 771" fill="none" stroke="#555" stroke-width="1.600"/>
<path d="M2 782L10 798H14L20 782" fill="#fff" stroke="#333"/>

<!-- left bottom tabs -->
<g transform="translate(10 809)" fill="none"><path d="M-5-8V8M-5-4H5M-5 1H5M-5 6H5" stroke="#2a6ea8"/><rect x="-7" y="-9" width="5" height="3" fill="#e24"/><rect x="1" y="-5" width="6" height="2" fill="#e24"/><rect x="1" y="0" width="6" height="2" fill="#e24"/><rect x="1" y="5" width="6" height="2" fill="#e24"/></g>
<g transform="translate(33 809)"><rect x="-7" y="-7" width="15" height="4" fill="#8a1c2c"/><path d="M-6-3H8L-2 8H-6Z" fill="#f05060"/></g>
<g transform="translate(57 809)"><path d="M-7-7H7V-2H3V7H-3V-2H-7Z" fill="#999" stroke="#222"/><circle cx="-3" cy="-4" r="1" fill="#e22"/><circle cx="3" cy="-4" r="1" fill="#e22"/><circle cx="0" cy="5" r="1" fill="#e22"/></g>

<!-- axes -->
<g fill="none"><path d="M279 760V730" stroke="#e8202c" stroke-width="3"/><path d="M278 760L259 744" stroke="#1020e0" stroke-width="4"/><path d="M276 765L258 774" stroke="#1f8f2f" stroke-width="5"/></g>
<path d="M279 723L275 733H283Z" fill="#e8202c"/><path d="M255 741L265 745L260 751Z" fill="#1020e0"/><path d="M251 778L262 768L265 776Z" fill="#1f8f2f"/>
<text x="282" y="734" font-size="14" fill="#e8202c" text-anchor="middle">Z</text><text x="257" y="750" font-size="14" fill="#1020e0" text-anchor="middle">X</text>
<circle cx="278" cy="760" r="2.500" fill="#e8202c"/>

<!-- bottom view toolbar -->
<g fill="#f0f0f0" stroke="#b0b0b0"><rect x="239" y="804" width="21" height="15"/><rect x="262" y="804" width="21" height="15"/><rect x="354" y="804" width="21" height="15"/><rect x="400" y="804" width="21" height="15"/><rect x="423" y="804" width="21" height="15"/><rect x="446" y="804" width="5" height="15"/></g>
<g fill="#fff" stroke="#1a4f92" stroke-width="1.400"><rect x="285.500" y="804.500" width="20" height="14"/><rect x="308.500" y="804.500" width="20" height="14"/><rect x="331.500" y="804.500" width="20" height="14"/><rect x="377.500" y="804.500" width="20" height="14"/></g>
<g font-size="10" fill="#2c70b8"><text x="243" y="813">n</text><text x="270" y="812">n</text><text x="289" y="811" font-size="8">N12</text><text x="426" y="811" font-size="8">123</text></g>
<path d="M248 813H258M265 816H281" stroke="#e0c020" stroke-width="2"/><path d="M244 817L248 814" stroke="#333"/>
<path d="M288 817L293 812H304L299 817Z" fill="#f0c820" stroke="#222"/>
<path d="M312 812L318 807L324 812Z" fill="#f0c820" stroke="#222"/><path d="M311 813H325M313 816H323" stroke="#222"/>
<path d="M337 817V809L341 806L348 811L344 817Z" fill="#f0c820" stroke="#222"/>
<path d="M364 806V813M358 816L364 813L372 813" stroke="#222"/><path d="M364 813H371" stroke="#e0c020" stroke-width="2"/>
<path d="M380 816L385 810H395L391 816Z" fill="#f0c820" stroke="#222"/>
<path d="M403 816H418M404 811H412M415 808V815" stroke="#e0b020"/><path d="M426 817H441" stroke="#222"/><path d="M438 808V815" stroke="#e0b020"/>
<path d="M463 808L458 812.500L463 817" fill="none" stroke="#444" stroke-width="2"/>
<path d="M1462 808L1467 812.500L1462 817" fill="none" stroke="#444" stroke-width="2"/>
<rect x="1473.500" y="805.500" width="6" height="14" fill="#f0f0f0" stroke="#bbb"/>
<g fill="#f0f0f0" stroke="#b0b0b0"><rect x="1481" y="805" width="19" height="15"/><rect x="1504" y="805" width="20" height="15"/><rect x="1527" y="805" width="20" height="15"/></g>
<path d="M1483 807L1497 818M1497 807L1483 818" stroke="#e22" stroke-width="1.200"/><path d="M1484 812C1488 810 1492 815 1496 812" stroke="#246" fill="none" stroke-width="2"/>
<path d="M1507 810H1512C1514 810 1515 815 1517 815H1521" stroke="#2a6ea8" fill="none" stroke-width="1.500"/>
<path d="M1530 813C1534 807 1541 807 1544 813L1541 817C1537 815 1533 815 1530 813Z" fill="#888"/><circle cx="1537" cy="812" r="2.500" fill="#2a9ac8"/>
<path d="M1558 818H1560M1554 818H1556M1558 814H1560M1558 810H1560M1554 814H1556M1550 818H1552" stroke="#aaa" stroke-width="2"/>

<!-- floating bar arrows -->
<path d="M1009 795L1013.500 790L1018 795Z" fill="#555"/><path d="M1028 790L1033 795L1038 790Z" fill="#555"/>

<!-- scroll chevrons -->
<path d="M1553 120L1557 116L1561 120M1553 793L1557 797L1561 793" fill="none" stroke="#444" stroke-width="2"/>

<!-- right toolbar -->
<g transform="translate(1584 132)"><circle cx="-8" cy="3" r="5" fill="#fff" stroke="#111"/><circle cx="3" cy="-8" r="5" fill="#fff" stroke="#111"/><text x="-8" y="7" font-size="9" text-anchor="middle">1</text><text x="3" y="-5" font-size="8" text-anchor="middle">A</text><path d="M-2 3H10M3-2V10" stroke="#111" stroke-dasharray="2 1"/></g>
<g transform="translate(1584 160)"><rect x="-12" y="-9" width="24" height="18" fill="#bfe8f8" stroke="#111"/><rect x="-12" y="-9" width="24" height="3" fill="#e5505f"/><rect x="-9" y="-3" width="18" height="6" fill="#eee" stroke="#111"/><path d="M-9 3L-5-3L-1 3L3-3L7 3" fill="none" stroke="#111"/></g>
<g transform="translate(1584 188)"><path d="M0-11V0M-9 8L0 0L9 8" fill="none" stroke="#222" stroke-width="1.600"/><circle cx="0" cy="0" r="1.600" fill="#e22"/></g>
<g transform="translate(1584 217)"><path d="M-12-5L11 6" stroke="#111" stroke-width="2"/><circle cx="-12" cy="-5" r="1.200" fill="#e22"/><circle cx="11" cy="6" r="1.200" fill="#e22"/></g>
<g transform="translate(1584 248)"><circle cx="3" cy="-5" r="5.500" fill="none" stroke="#d8384a" stroke-width="1.200"/><path d="M-11-2L-7-5H2L-1-2V8H-11Z" fill="url(#rg)" stroke="#333"/></g>
<g transform="translate(1584 283)"><path d="M-10-10H10V-7H3V7H10V10H-10V7H-3V-7H-10Z" fill="url(#rg)" stroke="#222"/></g>
<g transform="translate(1584 313)"><rect x="-2" y="-11" width="11" height="15" fill="#d8384a" stroke="#333"/><rect x="-5" y="-8" width="11" height="15" fill="#e8606f" stroke="#333"/><rect x="-12" y="-4" width="12" height="15" fill="#bbb" stroke="#111"/></g>
<g transform="translate(1584 342)"><path d="M-8-12V-5H11" fill="none" stroke="#333"/><path d="M0-5L-10 4H10Z" fill="url(#rg)" stroke="#333"/><path d="M-10 6H10M-10 9H10" stroke="#444" stroke-dasharray="2 1"/></g>
<g transform="translate(1584 378)"><path d="M-9-8H5" stroke="#d22" stroke-width="2"/><path d="M-11-8L-8-11V-5ZM7-8L4-11V-5Z" fill="#111"/><path d="M-11 6V-3H8V6M-5-3V6M1-3V6" fill="none" stroke="#111" stroke-width="1.400"/><path d="M-12 7H10" stroke="#111" stroke-width="2"/><path d="M11-10V5" stroke="#333"/></g>
<g transform="translate(1584 407)" fill="#a8a8a8"><rect x="-11" y="-7" width="22" height="17"/><rect x="-7" y="-5" width="3" height="8" fill="#f0f0f0"/><rect x="-1" y="-5" width="3" height="8" fill="#f0f0f0"/><rect x="5" y="-5" width="3" height="8" fill="#f0f0f0"/></g>
<g transform="translate(1584 435)"><path d="M-9 8V0H6V8M-3 0V8M2 0V8" fill="none" stroke="#111"/><path d="M-12 9H12" stroke="#111" stroke-width="2"/><path d="M-7-2L2-10" stroke="#b05030" stroke-width="2"/><path d="M2-12L4-9L7-9L5-7L6-4L3-6" fill="#e8c040"/><path d="M10-4V8" stroke="#333"/></g>
<g transform="translate(1584 473)" fill="none" stroke="#111" stroke-width="1.200"><path d="M-12-3L-6-9H2L6-6V9M-12-3V9M-12-3H2V9M-7-3V9M-12 3H2M6 0L12-6V5L6 9"/><path d="M-6-9H0M2-4L8-4" stroke="#e22" stroke-width="1.600"/></g>
<g transform="translate(1584 503)"><rect x="-10" y="-8" width="20" height="16" fill="#d7e8f8" stroke="#111"/><rect x="-10" y="-8" width="20" height="3" fill="#2231d0"/><path d="M-10-1H10M-10 3H10M-4-5V8M3-5V8" stroke="#556"/></g>
<g transform="translate(1584 532)"><path d="M-9-7H11L7-3H3V4H8L4 8H-12L-8 4H-3V-3H-12Z" fill="#e8304a" stroke="#222"/><path d="M-9-7L-12-3H3M8 4L4 8" fill="none" stroke="#111"/></g>
<g transform="translate(1584 562)"><path d="M-8-9H9V-3C3-2 0-2-3 2V9H-8Z" fill="url(#rg)" stroke="#222"/></g>
<g transform="translate(1584 590)"><path d="M-11-3L6-9L11-6L-5 3H-11Z" fill="#f4d048" stroke="#111"/><path d="M-11-3H-5L11-9M-11-3V8H-3L11 2V-9" fill="#f0c820" stroke="#111"/></g>
<g transform="translate(1584 627)"><path d="M-9-3L-4-7H6V7H-9Z" fill="url(#gg)" stroke="#444"/><path d="M5-4H11M5 0H11M5 4H11" stroke="#e22"/></g>
<path d="M1572 642H1600" stroke="#bbb"/>

<!-- status icons -->
<g transform="translate(11 850)"><path d="M-7-2V-6H-3M7 2V6H3" stroke="#222" fill="none"/><path d="M1-7L6-7M2-3L-2 3" stroke="#222"/><path d="M5 1V8M1 5H9" stroke="#8a1020"/><rect x="-7" y="4" width="3" height="3" fill="#d22"/></g>
<g transform="translate(29 850)"><path d="M-5-5H3L0 1H-2Z" fill="#e8c820" stroke="#555"/><text x="6" y="3" font-size="12" text-anchor="middle">?</text><path d="M-6 7H6" stroke="#111"/></g>
<g transform="translate(49 850)" fill="#555" stroke="#111"><rect x="-6" y="-7" width="5" height="5"/><rect x="2" y="-7" width="5" height="5"/><rect x="-6" y="2" width="5" height="5"/><rect x="2" y="2" width="5" height="5"/></g>
<g transform="translate(67 850)"><path d="M-7-6L7 7M7-6L-7 7" stroke="#d22"/><path d="M-6 2C-1-2 3 5 7 1" fill="none" stroke="#22a"/><path d="M1-6H6M3-6V-1" stroke="#111"/></g>
<circle cx="687" cy="852" r="5.500" fill="#bbb" stroke="#888"/>
<g transform="translate(995 851)"><text x="0" y="0" font-size="9" font-weight="bold" text-anchor="middle">A-1</text><path d="M-6 4H6" stroke="#d22" stroke-width="1.400"/></g>
<g transform="translate(1220 852)"><path d="M-5-7V6M-7 6H7" stroke="#111"/><path d="M-5-5H5V2" fill="none" stroke="#999" stroke-dasharray="1 1"/><circle cx="5" cy="-5" r="1" fill="#e22"/></g>
<g transform="translate(1418 852)"><path d="M-6-4H6" stroke="#e22" stroke-width="2"/><path d="M-6-3V5M6-3V5" stroke="#111"/><path d="M-6 4H6" stroke="#111" stroke-width="2"/></g>
</svg>
</div></body></html>
